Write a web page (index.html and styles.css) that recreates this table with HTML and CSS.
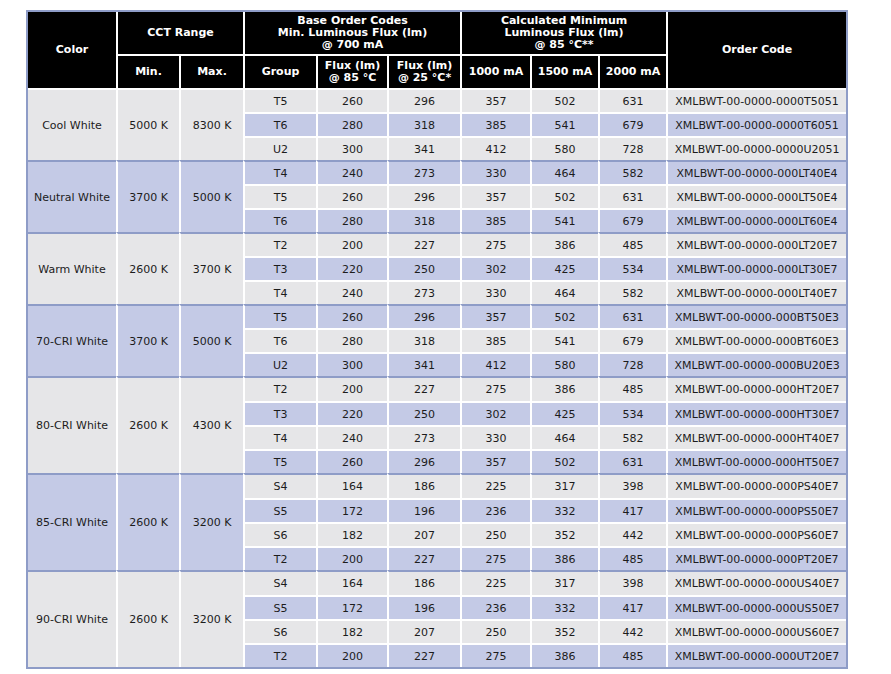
FILE: index.html
```html
<!DOCTYPE html>
<html>
<head>
<meta charset="utf-8">
<link rel="stylesheet" href="styles.css">
</head>
<body>
<div class="sheet">
<table class="lum">
<colgroup>
<col class="c-color"><col class="c-min"><col class="c-max"><col class="c-group"><col class="c-f85"><col class="c-f25"><col class="c-1000"><col class="c-1500"><col class="c-2000"><col class="c-code">
</colgroup>
<thead>
<tr class="h1">
<th rowspan="2" class="first">Color</th>
<th colspan="2">CCT Range</th>
<th colspan="3">Base Order Codes<br>Min. Luminous Flux (lm)<br>@ 700 mA</th>
<th colspan="3">Calculated Minimum<br>Luminous Flux (lm)<br>@ 85 °C**</th>
<th rowspan="2">Order Code</th>
</tr>
<tr class="h2">
<th>Min.</th><th>Max.</th><th>Group</th><th>Flux (lm)<br>@ 85 °C</th><th>Flux (lm)<br>@ 25 °C*</th><th>1000 mA</th><th>1500 mA</th><th>2000 mA</th>
</tr>
</thead>
<tbody>
<tr class="a"><td rowspan="3" class="first ga">Cool White</td><td rowspan="3" class="ga">5000 K</td><td rowspan="3" class="ga">8300 K</td><td>T5</td><td>260</td><td>296</td><td>357</td><td>502</td><td>631</td><td>XMLBWT-00-0000-0000T5051</td></tr>
<tr class="b"><td>T6</td><td>280</td><td>318</td><td>385</td><td>541</td><td>679</td><td>XMLBWT-00-0000-0000T6051</td></tr>
<tr class="a"><td>U2</td><td>300</td><td>341</td><td>412</td><td>580</td><td>728</td><td>XMLBWT-00-0000-0000U2051</td></tr>

<tr class="b g"><td rowspan="3" class="first gb">Neutral White</td><td rowspan="3" class="gb">3700 K</td><td rowspan="3" class="gb">5000 K</td><td>T4</td><td>240</td><td>273</td><td>330</td><td>464</td><td>582</td><td>XMLBWT-00-0000-000LT40E4</td></tr>
<tr class="a"><td>T5</td><td>260</td><td>296</td><td>357</td><td>502</td><td>631</td><td>XMLBWT-00-0000-000LT50E4</td></tr>
<tr class="b"><td>T6</td><td>280</td><td>318</td><td>385</td><td>541</td><td>679</td><td>XMLBWT-00-0000-000LT60E4</td></tr>

<tr class="a g"><td rowspan="3" class="first ga">Warm White</td><td rowspan="3" class="ga">2600 K</td><td rowspan="3" class="ga">3700 K</td><td>T2</td><td>200</td><td>227</td><td>275</td><td>386</td><td>485</td><td>XMLBWT-00-0000-000LT20E7</td></tr>
<tr class="b"><td>T3</td><td>220</td><td>250</td><td>302</td><td>425</td><td>534</td><td>XMLBWT-00-0000-000LT30E7</td></tr>
<tr class="a"><td>T4</td><td>240</td><td>273</td><td>330</td><td>464</td><td>582</td><td>XMLBWT-00-0000-000LT40E7</td></tr>

<tr class="b g"><td rowspan="3" class="first gb">70-CRI White</td><td rowspan="3" class="gb">3700 K</td><td rowspan="3" class="gb">5000 K</td><td>T5</td><td>260</td><td>296</td><td>357</td><td>502</td><td>631</td><td>XMLBWT-00-0000-000BT50E3</td></tr>
<tr class="a"><td>T6</td><td>280</td><td>318</td><td>385</td><td>541</td><td>679</td><td>XMLBWT-00-0000-000BT60E3</td></tr>
<tr class="b"><td>U2</td><td>300</td><td>341</td><td>412</td><td>580</td><td>728</td><td>XMLBWT-00-0000-000BU20E3</td></tr>

<tr class="a g g4"><td rowspan="4" class="first ga">80-CRI White</td><td rowspan="4" class="ga">2600 K</td><td rowspan="4" class="ga">4300 K</td><td>T2</td><td>200</td><td>227</td><td>275</td><td>386</td><td>485</td><td>XMLBWT-00-0000-000HT20E7</td></tr>
<tr class="b"><td>T3</td><td>220</td><td>250</td><td>302</td><td>425</td><td>534</td><td>XMLBWT-00-0000-000HT30E7</td></tr>
<tr class="a"><td>T4</td><td>240</td><td>273</td><td>330</td><td>464</td><td>582</td><td>XMLBWT-00-0000-000HT40E7</td></tr>
<tr class="b"><td>T5</td><td>260</td><td>296</td><td>357</td><td>502</td><td>631</td><td>XMLBWT-00-0000-000HT50E7</td></tr>

<tr class="a g g4"><td rowspan="4" class="first gb">85-CRI White</td><td rowspan="4" class="gb">2600 K</td><td rowspan="4" class="gb">3200 K</td><td>S4</td><td>164</td><td>186</td><td>225</td><td>317</td><td>398</td><td>XMLBWT-00-0000-000PS40E7</td></tr>
<tr class="b"><td>S5</td><td>172</td><td>196</td><td>236</td><td>332</td><td>417</td><td>XMLBWT-00-0000-000PS50E7</td></tr>
<tr class="a"><td>S6</td><td>182</td><td>207</td><td>250</td><td>352</td><td>442</td><td>XMLBWT-00-0000-000PS60E7</td></tr>
<tr class="b"><td>T2</td><td>200</td><td>227</td><td>275</td><td>386</td><td>485</td><td>XMLBWT-00-0000-000PT20E7</td></tr>

<tr class="a g g4"><td rowspan="4" class="first ga">90-CRI White</td><td rowspan="4" class="ga">2600 K</td><td rowspan="4" class="ga">3200 K</td><td>S4</td><td>164</td><td>186</td><td>225</td><td>317</td><td>398</td><td>XMLBWT-00-0000-000US40E7</td></tr>
<tr class="b"><td>S5</td><td>172</td><td>196</td><td>236</td><td>332</td><td>417</td><td>XMLBWT-00-0000-000US50E7</td></tr>
<tr class="a"><td>S6</td><td>182</td><td>207</td><td>250</td><td>352</td><td>442</td><td>XMLBWT-00-0000-000US60E7</td></tr>
<tr class="b"><td>T2</td><td>200</td><td>227</td><td>275</td><td>386</td><td>485</td><td>XMLBWT-00-0000-000UT20E7</td></tr>
</tbody>
</table>
</div>
</body>
</html>
```

FILE: styles.css
```css
html, body {
  margin: 0;
  padding: 0;
  background: #ffffff;
}
body {
  padding: 10px 0 0 26px;
  font-family: "DejaVu Sans", Verdana, sans-serif;
  font-size: 11px;
  color: #1c1c1c;
}
.sheet {
  display: inline-block;
  border: 2px solid #8e9cc7;
}
.lum {
  border-collapse: separate;
  border-spacing: 0;
  table-layout: fixed;
  width: 818px;
}
.c-color { width: 88px; }
.c-min { width: 63px; }
.c-max { width: 64px; }
.c-group { width: 73px; }
.c-f85 { width: 71px; }
.c-f25 { width: 73px; }
.c-1000 { width: 70px; }
.c-1500 { width: 68px; }
.c-2000 { width: 68px; }
.c-code { width: 180px; }

.lum th,
.lum td {
  box-sizing: border-box;
  padding: 0;
  text-align: center;
  vertical-align: middle;
  border-left: 2px solid #ffffff;
  border-top: 2px solid #ffffff;
  white-space: nowrap;
}
.lum th.first,
.lum td.first {
  border-left: none;
}
.lum th {
  background: #000000;
  color: #ffffff;
  font-weight: bold;
  line-height: 12px;
}
.h1 { height: 42px; }
.h1 th { border-top: none; }
.h2 { height: 34px; }

.lum tbody tr { height: 24px; }
.lum tbody tr.g4 { height: 25px; }
.lum tbody td { line-height: 13px; }
.lum tr.a td { background: #e6e6e8; }
.lum tr.b td { background: #c4cae6; }
.lum tr td.ga { background: #e6e6e8; }
.lum tr td.gb { background: #c4cae6; }
.lum tr.g td { border-top-color: #8e9cc7; }
```
